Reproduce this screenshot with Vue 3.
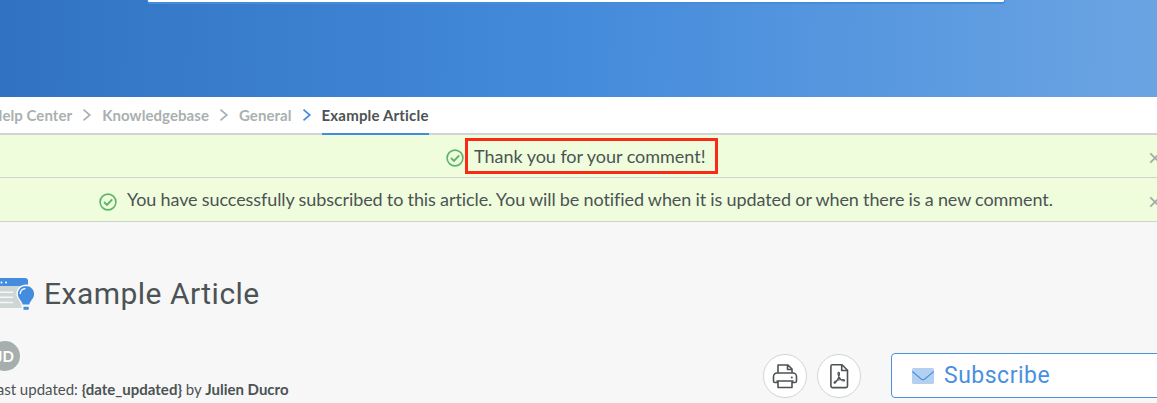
<script setup>
const crumbs = ['Help Center', 'Knowledgebase', 'General']
const alerts = [
  { text: 'Thank you for your comment!', kind: 'first', boxed: true },
  { text: 'You have successfully subscribed to this article. You will be notified when it is updated or when there is a new comment.', kind: 'second', boxed: false },
]
</script>

<template>
  <div class="page">
    <header class="hero"><div class="search"></div></header>

    <nav class="crumbs">
      <template v-for="(c, i) in crumbs" :key="c">
        <a class="crumb">{{ c }}</a>
        <svg class="chev" :class="{ active: i === 2 }" width="10" height="14" viewBox="0 0 10 14"><path d="M1.5 1.6 7.8 7 1.5 12.4" /></svg>
      </template>
      <a class="crumb current">Example Article</a>
    </nav>

    <div v-for="a in alerts" :key="a.kind" class="alert" :class="a.kind">
      <svg class="check" width="18" height="18" viewBox="0 0 18 18"><circle cx="9" cy="9" r="7.9" /><path d="M5 9.1 8 11.9 13.2 6.4" /></svg>
      <span :class="{ boxed: a.boxed }"><span class="msg">{{ a.text }}</span></span>
      <svg class="close" width="12" height="12" viewBox="0 0 12 12"><path d="M1.3 1.3 10.7 10.7M10.7 1.3 1.3 10.7" /></svg>
    </div>

    <main class="article">
      <div class="title">
        <svg class="icon" width="40" height="34" viewBox="0 0 40 34">
          <path d="M0 9h36v22H0z" fill="#d0d5d5" />
          <path d="M0 1h31a3 3 0 0 1 3 3v5H0z" fill="#448dde" />
          <g fill="#fff"><circle cx="7.5" cy="5.5" r="1" /><circle cx="12" cy="5.5" r="1" /></g>
          <path d="M0 15.2h18.500M0 20.3h18.500M0 25.500h18.500" stroke="#f7f7f7" stroke-width="1.6" stroke-linecap="round" />
          <path d="M32 7.5c-5.5 0-9.6 4-9.6 9.3 0 4.8 3.4 6.4 5 11.3V34H40V9.5C38 8.300 35 7.500 32 7.500z" fill="#f7f7f7" />
          <path d="M32 9c-4.600 0-8.100 3.500-8.100 8 0 4.700 3.700 6 4.800 10.600h6.600c1.100-4.600 4.800-5.900 4.800-10.600 0-4.500-3.500-8-8.100-8z" fill="#448dde" />
          <path d="M29.500 29.800h5.200v3h-5.200z" fill="#448dde" />
          <path d="M26.200 16.500c.3-2.700 2.100-4.500 4.800-4.900" fill="none" stroke="#fff" stroke-width="1.300" stroke-linecap="round" />
        </svg>
        <h1>Example Article</h1>
      </div>

      <div class="row">
        <div class="meta">
          <div class="avatar">JD</div>
          <div class="updated">Last updated: <b>{date_updated}</b> by <b>Julien Ducro</b></div>
        </div>
        <div class="actions">
          <button class="round">
            <svg width="26" height="26" viewBox="0 0 26 26">
              <path d="M6 10V2h10l4 4v4M15.500 2v4.500H20M6 19.500H3a1.500 1.500 0 0 1-1.500-1.500v-4.500A3.500 3.500 0 0 1 5 10h16a3.500 3.500 0 0 1 3.500 3.500V18a1.500 1.500 0 0 1-1.500 1.500h-3M6 18v6.500h14V18M4.500 18h17" />
              <circle cx="19.800" cy="14.500" r="1" class="dot" />
            </svg>
          </button>
          <button class="round">
            <svg width="26" height="26" viewBox="0 0 26 26">
              <path d="M6.500 1.800H16l5.500 5.500V23a1.600 1.600 0 0 1-1.600 1.600H6.500A1.600 1.600 0 0 1 4.900 23V3.400a1.600 1.600 0 0 1 1.600-1.600zM15.700 2v5.500h5.600" />
              <path class="thin" d="M12.600 9.300c-1.300.3-.3 3 .6 4.900.9 1.800 2.800 3.700 4.600 3.800 1.300-.1.800-1.700-1.500-1.500-2.400.1-5.500.7-7.200 1.900-1.700 1.300-.7 2.800.8.800 1.300-1.700 3.100-5.200 3.500-7.600.200-1.400-.1-2.400-.8-2.300z" />
            </svg>
          </button>
          <button class="subscribe">
            <svg width="22" height="16" viewBox="0 0 22 16"><rect width="22" height="16" rx="1.500" fill="#b4d0f1" /><path d="M.3 3.500 9.500 11.200q1.500 1.100 3 0L21.700 3.500" fill="none" stroke="#4a90dd" stroke-width="1.100" /></svg>
            <span>Subscribe</span>
          </button>
        </div>
      </div>
    </main>
  </div>
</template>

<style>
body { margin: 0; overflow: hidden; }
</style>

<style scoped>
.page { box-sizing: border-box; width: 1157px; height: 403px; overflow: hidden; background: #f7f7f7; color: #4c5354; font-family: Lato, sans-serif; }
.hero { height: 97px; background: linear-gradient(91deg, #3173c2 0%, #448bdb 50%, #6ba4e3 100%); }
.search { box-sizing: border-box; width: 858px; height: 4px; margin-left: 147px; background: #fff; border: 1px solid #448ddd; border-width: 0 1px 2px; border-radius: 0 0 3px 3px; }
.crumbs { box-sizing: border-box; display: flex; height: 38px; border-bottom: 2px solid #d0d4d6; margin-left: -9px; background: #fff; line-height: 37px; font-size: 15px; font-weight: 700; white-space: nowrap; letter-spacing: .06px; }
.crumb { color: #aab0b0; }
.chev { flex: none; margin: 11px 10px 0; fill: none; stroke: #aab0b0; stroke-width: 1.700; }
.chev.active { stroke: #448ddd; }
.current { box-sizing: border-box; height: 38px; color: #4c5354; border-bottom: 2px solid #448ddd; letter-spacing: .18px; }
.alert { position: relative; box-sizing: border-box; display: flex; align-items: center; height: 43px; background: #effddd; border-bottom: 1px solid #ced3cf; white-space: nowrap; font-size: 18px; font-variant-ligatures: common-ligatures; }
.alert.first { padding-left: 446px; letter-spacing: -.03px; }
.alert.second { height: 44px; padding-left: 99px; letter-spacing: -.08px; word-spacing: -.28px; }
.check { flex: none; margin-top: 4px; fill: none; stroke: #5bb568; stroke-width: 1.600; }
.check path { stroke-width: 2; }
.boxed { box-sizing: border-box; width: 253px; height: 36px; margin-left: 1px; padding-left: 6px; border: 3px solid #fb2a17; line-height: 31px; }
.second .msg { display: block; margin: -1px 0 0 10px; }
.close { position: absolute; right: -4px; top: 17px; fill: none; stroke: #a3aaa8; stroke-width: 1.800; }
.second .close { top: 18px; }
.title { display: flex; align-items: flex-start; height: 120px; padding-top: 55px; box-sizing: border-box; }
.icon { flex: none; margin-left: -6px; }
h1 { margin: 0 0 0 10px; font: 400 30px/34px Roboto, sans-serif; letter-spacing: .48px; white-space: nowrap; }
.row { display: flex; justify-content: space-between; height: 61px; }
.avatar { display: flex; align-items: center; justify-content: center; width: 30px; height: 30px; margin-left: -10px; margin-top: -1px; border-radius: 50%; background: #a7afae; color: #fff; font-size: 15px; font-weight: 700; }
.updated { margin: 9px 0 0 -11px; font-size: 15px; line-height: 18px; white-space: nowrap; }
.actions { display: flex; margin-right: -120px; padding-top: 11px; }
.round { box-sizing: border-box; display: flex; align-items: center; justify-content: center; width: 44px; height: 44px; margin: 1px 10px 0 0; padding: 0; border: 1px solid #d4d5d5; border-radius: 50%; background: #fff; }
.round svg { fill: none; stroke: #4c5354; stroke-width: 1.600; stroke-linejoin: round; }
.round .thin { stroke-width: 1.200; }
.round .dot { fill: #4c5354; stroke: none; }
.subscribe { box-sizing: border-box; display: flex; align-items: center; width: 386px; height: 45px; margin-left: 20px; padding: 0 0 0 20px; border: 1px solid #4a90dd; border-radius: 4px; background: #fff; color: #4a90dd; font: 400 23px/28px Roboto, sans-serif; letter-spacing: .5px; }
.subscribe span { margin-left: 10px; }
</style>
